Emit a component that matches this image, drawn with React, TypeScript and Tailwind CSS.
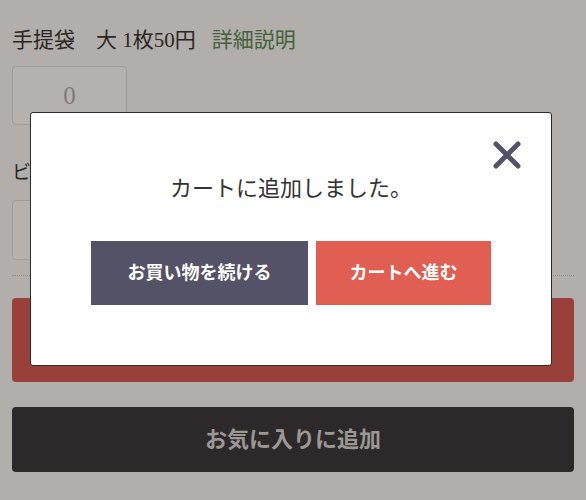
const serif = { fontFamily: '"Liberation Serif", "Noto Sans CJK JP", serif' };

const CloseIcon = () => (
  <svg viewBox="0 0 30 30" className="h-[30px] w-[30px]">
    <path
      d="M4 4 L26 26 M26 4 L4 26"
      stroke="#545266"
      strokeWidth="5"
      strokeLinecap="round"
    />
  </svg>
);

function CartModal() {
  return (
    <div className="absolute left-[30px] top-[112px] h-[254px] w-[522px] rounded-[3px] border border-[#2b2b2b] bg-white">
      <button className="absolute right-[29px] top-[27px]">
        <CloseIcon />
      </button>
      <div className="flex flex-col items-center pt-[62px]">
        <p className="text-[22px] leading-[28px] text-[#333]">
          カートに追加しました。
        </p>
        <div className="mt-[38px] flex gap-2">
          <button className="flex h-[64px] w-[217px] items-center justify-center bg-[#545266] text-[18px] font-bold text-white">
            お買い物を続ける
          </button>
          <button className="flex h-[64px] w-[175px] items-center justify-center bg-[#e05e52] text-[18px] font-bold text-white">
            カートへ進む
          </button>
        </div>
      </div>
    </div>
  );
}

export default function App() {
  return (
    <div
      className="relative h-[500px] w-[586px] overflow-hidden bg-[#b2aeab] px-3"
      style={serif}
    >
      <div className="pt-[26px]">
        <h2 className="text-[21px] leading-[28px] text-[#2a2624]">
          手提袋　大 1枚50円
          <span className="ml-4 text-[#43603a]">詳細説明</span>
        </h2>
      </div>

      <div className="mt-[12px] flex h-[59px] w-[115px] items-center justify-center rounded-[4px] border border-[#9f9b99] bg-[#b5b1af] text-[25px] text-[#7e7a78]">
        0
      </div>

      <p className="mt-[35px] text-[19px] leading-[26px] text-[#2a2624]">
        ビニール袋
      </p>

      <div className="mt-[14px] flex h-[60px] w-[115px] items-center justify-center rounded-[4px] border border-[#9f9b99] bg-[#b5b1af] text-[25px] text-[#7e7a78]">
        0
      </div>

      <div className="mt-[15px] border-t border-dotted border-[#8f8b89]" />

      <div className="mt-[22px] h-[84px] rounded-[4px] bg-[#9a403a]" />

      <button className="mt-[25px] flex h-[65px] w-full items-center justify-center rounded-[4px] bg-[#2d2829] text-[22px] font-bold text-[#9b9896]">
        お気に入りに追加
      </button>

      <CartModal />
    </div>
  );
}
